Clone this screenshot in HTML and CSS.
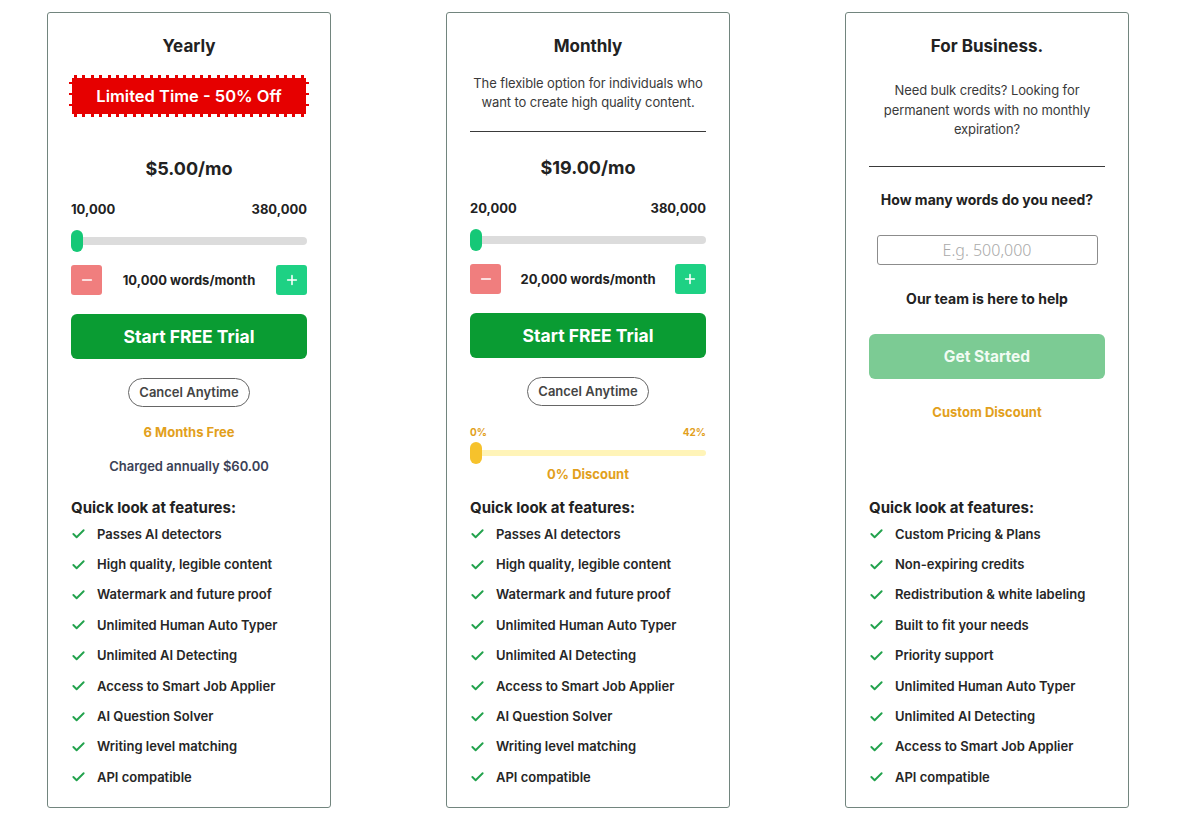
FILE: index.html
```html
<!DOCTYPE html>
<html lang="en">
<head>
<meta charset="utf-8">
<title>Pricing</title>
<link rel="stylesheet" href="styles.css">
</head>
<body>
<div class="plans">
  <!-- Yearly -->
  <section class="card">
    <div class="top">
      <h2 class="title">Yearly</h2>
      <div class="badge"><span>Limited Time - 50% Off</span></div>
      <div class="price price-yearly">$5.00/mo</div>
      <div class="range-labels"><span>10,000</span><span>380,000</span></div>
      <div class="slider"><div class="track"></div><div class="thumb"></div></div>
      <div class="stepper">
        <button class="step minus" type="button"><svg viewBox="0 0 16 16" width="14" height="14"><path d="M3 8h10" stroke="#fff" stroke-width="1.8" stroke-linecap="round"/></svg></button>
        <span class="words">10,000 words/month</span>
        <button class="step plus" type="button"><svg viewBox="0 0 16 16" width="14" height="14"><path d="M3 8h10M8 3v10" stroke="#fff" stroke-width="1.8" stroke-linecap="round"/></svg></button>
      </div>
      <button class="cta" type="button">Start FREE Trial</button>
      <div class="pill-wrap"><span class="pill">Cancel Anytime</span></div>
      <div class="orange note-free">6 Months Free</div>
      <div class="charged">Charged annually $60.00</div>
    </div>
    <div class="features">
      <h3>Quick look at features:</h3>
      <ul>
        <li><svg class="check" viewBox="0 0 16 16"><path d="M2.5 8.5l3.5 3.5 7.5-7.5"/></svg>Passes AI detectors</li>
        <li><svg class="check" viewBox="0 0 16 16"><path d="M2.5 8.5l3.5 3.5 7.5-7.5"/></svg>High quality, legible content</li>
        <li><svg class="check" viewBox="0 0 16 16"><path d="M2.5 8.5l3.5 3.5 7.5-7.5"/></svg>Watermark and future proof</li>
        <li><svg class="check" viewBox="0 0 16 16"><path d="M2.5 8.5l3.5 3.5 7.5-7.5"/></svg>Unlimited Human Auto Typer</li>
        <li><svg class="check" viewBox="0 0 16 16"><path d="M2.5 8.5l3.5 3.5 7.5-7.5"/></svg>Unlimited AI Detecting</li>
        <li><svg class="check" viewBox="0 0 16 16"><path d="M2.5 8.5l3.5 3.5 7.5-7.5"/></svg>Access to Smart Job Applier</li>
        <li><svg class="check" viewBox="0 0 16 16"><path d="M2.5 8.5l3.5 3.5 7.5-7.5"/></svg>AI Question Solver</li>
        <li><svg class="check" viewBox="0 0 16 16"><path d="M2.5 8.5l3.5 3.5 7.5-7.5"/></svg>Writing level matching</li>
        <li><svg class="check" viewBox="0 0 16 16"><path d="M2.5 8.5l3.5 3.5 7.5-7.5"/></svg>API compatible</li>
      </ul>
    </div>
  </section>

  <!-- Monthly -->
  <section class="card">
    <div class="top">
      <h2 class="title">Monthly</h2>
      <p class="desc desc-monthly">The flexible option for individuals who want to create high quality content.</p>
      <hr class="rule rule-monthly">
      <div class="price price-monthly">$19.00/mo</div>
      <div class="range-labels"><span>20,000</span><span>380,000</span></div>
      <div class="slider"><div class="track"></div><div class="thumb"></div></div>
      <div class="stepper">
        <button class="step minus" type="button"><svg viewBox="0 0 16 16" width="14" height="14"><path d="M3 8h10" stroke="#fff" stroke-width="1.8" stroke-linecap="round"/></svg></button>
        <span class="words">20,000 words/month</span>
        <button class="step plus" type="button"><svg viewBox="0 0 16 16" width="14" height="14"><path d="M3 8h10M8 3v10" stroke="#fff" stroke-width="1.8" stroke-linecap="round"/></svg></button>
      </div>
      <button class="cta" type="button">Start FREE Trial</button>
      <div class="pill-wrap"><span class="pill">Cancel Anytime</span></div>
      <div class="disc-labels"><span>0%</span><span>42%</span></div>
      <div class="slider slider-disc"><div class="track"></div><div class="thumb"></div></div>
      <div class="orange disc-text">0% Discount</div>
    </div>
    <div class="features">
      <h3>Quick look at features:</h3>
      <ul>
        <li><svg class="check" viewBox="0 0 16 16"><path d="M2.5 8.5l3.5 3.5 7.5-7.5"/></svg>Passes AI detectors</li>
        <li><svg class="check" viewBox="0 0 16 16"><path d="M2.5 8.5l3.5 3.5 7.5-7.5"/></svg>High quality, legible content</li>
        <li><svg class="check" viewBox="0 0 16 16"><path d="M2.5 8.5l3.5 3.5 7.5-7.5"/></svg>Watermark and future proof</li>
        <li><svg class="check" viewBox="0 0 16 16"><path d="M2.5 8.5l3.5 3.5 7.5-7.5"/></svg>Unlimited Human Auto Typer</li>
        <li><svg class="check" viewBox="0 0 16 16"><path d="M2.5 8.5l3.5 3.5 7.5-7.5"/></svg>Unlimited AI Detecting</li>
        <li><svg class="check" viewBox="0 0 16 16"><path d="M2.5 8.5l3.5 3.5 7.5-7.5"/></svg>Access to Smart Job Applier</li>
        <li><svg class="check" viewBox="0 0 16 16"><path d="M2.5 8.5l3.5 3.5 7.5-7.5"/></svg>AI Question Solver</li>
        <li><svg class="check" viewBox="0 0 16 16"><path d="M2.5 8.5l3.5 3.5 7.5-7.5"/></svg>Writing level matching</li>
        <li><svg class="check" viewBox="0 0 16 16"><path d="M2.5 8.5l3.5 3.5 7.5-7.5"/></svg>API compatible</li>
      </ul>
    </div>
  </section>

  <!-- Business -->
  <section class="card">
    <div class="top">
      <h2 class="title">For Business.</h2>
      <p class="desc desc-biz">Need bulk credits? Looking for permanent words with no monthly expiration?</p>
      <hr class="rule rule-biz">
      <div class="question">How many words do you need?</div>
      <div class="input-wrap"><input class="words-input" type="text" placeholder="E.g. 500,000"></div>
      <div class="question help">Our team is here to help</div>
      <button class="cta cta-light" type="button">Get Started</button>
      <div class="orange custom-disc">Custom Discount</div>
    </div>
    <div class="features">
      <h3>Quick look at features:</h3>
      <ul>
        <li><svg class="check" viewBox="0 0 16 16"><path d="M2.5 8.5l3.5 3.5 7.5-7.5"/></svg>Custom Pricing &amp; Plans</li>
        <li><svg class="check" viewBox="0 0 16 16"><path d="M2.5 8.5l3.5 3.5 7.5-7.5"/></svg>Non-expiring credits</li>
        <li><svg class="check" viewBox="0 0 16 16"><path d="M2.5 8.5l3.5 3.5 7.5-7.5"/></svg>Redistribution &amp; white labeling</li>
        <li><svg class="check" viewBox="0 0 16 16"><path d="M2.5 8.5l3.5 3.5 7.5-7.5"/></svg>Built to fit your needs</li>
        <li><svg class="check" viewBox="0 0 16 16"><path d="M2.5 8.5l3.5 3.5 7.5-7.5"/></svg>Priority support</li>
        <li><svg class="check" viewBox="0 0 16 16"><path d="M2.5 8.5l3.5 3.5 7.5-7.5"/></svg>Unlimited Human Auto Typer</li>
        <li><svg class="check" viewBox="0 0 16 16"><path d="M2.5 8.5l3.5 3.5 7.5-7.5"/></svg>Unlimited AI Detecting</li>
        <li><svg class="check" viewBox="0 0 16 16"><path d="M2.5 8.5l3.5 3.5 7.5-7.5"/></svg>Access to Smart Job Applier</li>
        <li><svg class="check" viewBox="0 0 16 16"><path d="M2.5 8.5l3.5 3.5 7.5-7.5"/></svg>API compatible</li>
      </ul>
    </div>
  </section>
</div>
</body>
</html>
```

FILE: styles.css
```css
* { box-sizing: border-box; }
html, body { margin: 0; padding: 0; background: #fff; }
body {
  font-family: Inter, "Liberation Sans", Arial, sans-serif;
  color: #222;
  -webkit-font-smoothing: antialiased;
}

.plans {
  display: flex;
  gap: 115px;
  padding: 12px 0 0 47px;
}

.card {
  width: 284px;
  height: 796px;
  border: 1.5px solid #72857e;
  border-radius: 3px;
  padding: 22px 23px 0 23px;
  display: flex;
  flex-direction: column;
  background: #fff;
}

.top { display: flex; flex-direction: column; }

.title {
  margin: 0;
  font-size: 17px;
  line-height: 22px;
  font-weight: 700;
  text-align: center;
  color: #222;
}

/* stamp badge */
.badge {
  position: relative;
  margin: 21px 1px 0 1px;
  height: 36px;
  background: #e60000;
  color: #fff;
  font-size: 16.5px;
  font-weight: 600;
  line-height: 36px;
  text-align: center;
}
.badge::before,
.badge::after {
  content: "";
  position: absolute;
  left: 2px;
  right: 2px;
  height: 3px;
  background: repeating-linear-gradient(90deg, #e60000 0 3px, transparent 3px 8.4px);
}
.badge::before { top: -3px; }
.badge::after { bottom: -3px; }
.badge span {
  display: block;
  position: relative;
}
.badge span::before,
.badge span::after {
  content: "";
  position: absolute;
  top: 4px;
  bottom: 4px;
  width: 3px;
  background: repeating-linear-gradient(180deg, #e60000 0 2px, transparent 2px 11px);
}
.badge span::before { left: -3px; }
.badge span::after { right: -3px; }

.price {
  font-size: 18px;
  line-height: 24px;
  font-weight: 700;
  text-align: center;
  color: #222;
}
.price-yearly { margin-top: 43px; }
.price-monthly { margin-top: 24px; }

.desc {
  margin: 0;
  font-size: 13px;
  letter-spacing: -0.1px;
  text-align: center;
  color: #3a3a3a;
  font-weight: 400;
}
.desc-monthly { margin-top: 17px; line-height: 19px; }
.desc-biz { margin-top: 24px; line-height: 19.5px; padding: 0 8px; }

.rule {
  margin: 0;
  border: 0;
  border-top: 1px solid #3a3a3a;
  height: 0;
}
.rule-monthly { margin-top: 19px; }
.rule-biz { margin-top: 26px; }

.range-labels,
.disc-labels {
  display: flex;
  justify-content: space-between;
  font-weight: 700;
}
.range-labels {
  margin-top: 19px;
  font-size: 13px;
  line-height: 18px;
  color: #222;
}

.slider {
  position: relative;
  height: 22px;
  margin-top: 12px;
  display: flex;
  align-items: center;
}
.slider .track {
  flex: 1;
  height: 8px;
  border-radius: 4px;
  background: #dcdcdc;
}
.slider .thumb {
  position: absolute;
  left: 0;
  top: 0;
  width: 12px;
  height: 22px;
  border-radius: 6px;
  background: #15c877;
}

.stepper {
  margin-top: 13px;
  height: 30px;
  display: flex;
  align-items: center;
  justify-content: space-between;
}
.step {
  width: 31px;
  height: 30px;
  border: 0;
  border-radius: 3px;
  padding: 0;
  display: flex;
  align-items: center;
  justify-content: center;
}
.minus { background: #f07e7e; }
.plus { background: #1ed184; }
.words {
  font-size: 13px;
  font-weight: 700;
  color: #222;
}

.cta {
  margin-top: 19px;
  height: 45px;
  border: 0;
  border-radius: 6px;
  background: #0a9c33;
  color: #fff;
  font-family: inherit;
  font-size: 17.5px;
  font-weight: 700;
  width: 100%;
}
.cta-light {
  margin-top: 25px;
  background: #7ccb94;
  color: #f1fbf3;
  font-size: 15.5px;
}

.pill-wrap {
  margin-top: 19px;
  display: flex;
  justify-content: center;
}
.pill {
  height: 29px;
  line-height: 27px;
  padding: 0 10px;
  border: 1px solid #666;
  border-radius: 15px;
  font-size: 13px;
  font-weight: 600;
  color: #444;
}

.orange { color: #e2a01c; font-weight: 700; text-align: center; }
.note-free {
  margin-top: 16px;
  font-size: 13px;
  line-height: 18px;
}
.charged {
  margin-top: 16px;
  font-size: 13px;
  line-height: 18px;
  font-weight: 600;
  text-align: center;
  color: #3b4156;
}

.disc-labels {
  margin-top: 19px;
  font-size: 10px;
  line-height: 14px;
  color: #e2a01c;
}
.slider-disc { margin-top: 3px; }
.slider-disc .track { height: 6px; background: #fff4b8; }
.slider-disc .thumb { background: #f6c22c; }
.disc-text {
  margin-top: 1px;
  font-size: 13px;
  line-height: 18px;
}

.question {
  margin-top: 23px;
  font-size: 14px;
  line-height: 20px;
  font-weight: 700;
  text-align: center;
  color: #222;
}
.question.help { margin-top: 24px; }

.input-wrap {
  margin-top: 25px;
  display: flex;
  justify-content: center;
}
.words-input {
  width: 221px;
  height: 30px;
  border: 1px solid #8c8c8c;
  border-radius: 3px;
  text-align: center;
  font-family: "Noto Sans", "Open Sans", sans-serif;
  font-size: 16px;
  font-weight: 300;
  color: #222;
  padding: 0 6px;
}
.words-input::placeholder { color: #a9a9a9; }

.custom-disc {
  margin-top: 24px;
  font-size: 13px;
  line-height: 18px;
}

.features {
  margin-top: auto;
  padding-bottom: 15px;
}
.features h3 {
  margin: 0;
  font-size: 15px;
  line-height: 20px;
  font-weight: 700;
  color: #222;
}
.features ul {
  list-style: none;
  margin: 0;
  padding: 0;
}
.features li {
  height: 30.4px;
  display: flex;
  align-items: center;
  font-size: 13px;
  font-weight: 600;
  color: #262626;
}
.check {
  width: 15px;
  height: 15px;
  margin-right: 11px;
  fill: none;
  stroke: #22a24d;
  stroke-width: 2;
  stroke-linecap: round;
  stroke-linejoin: round;
  flex: none;
}
```
